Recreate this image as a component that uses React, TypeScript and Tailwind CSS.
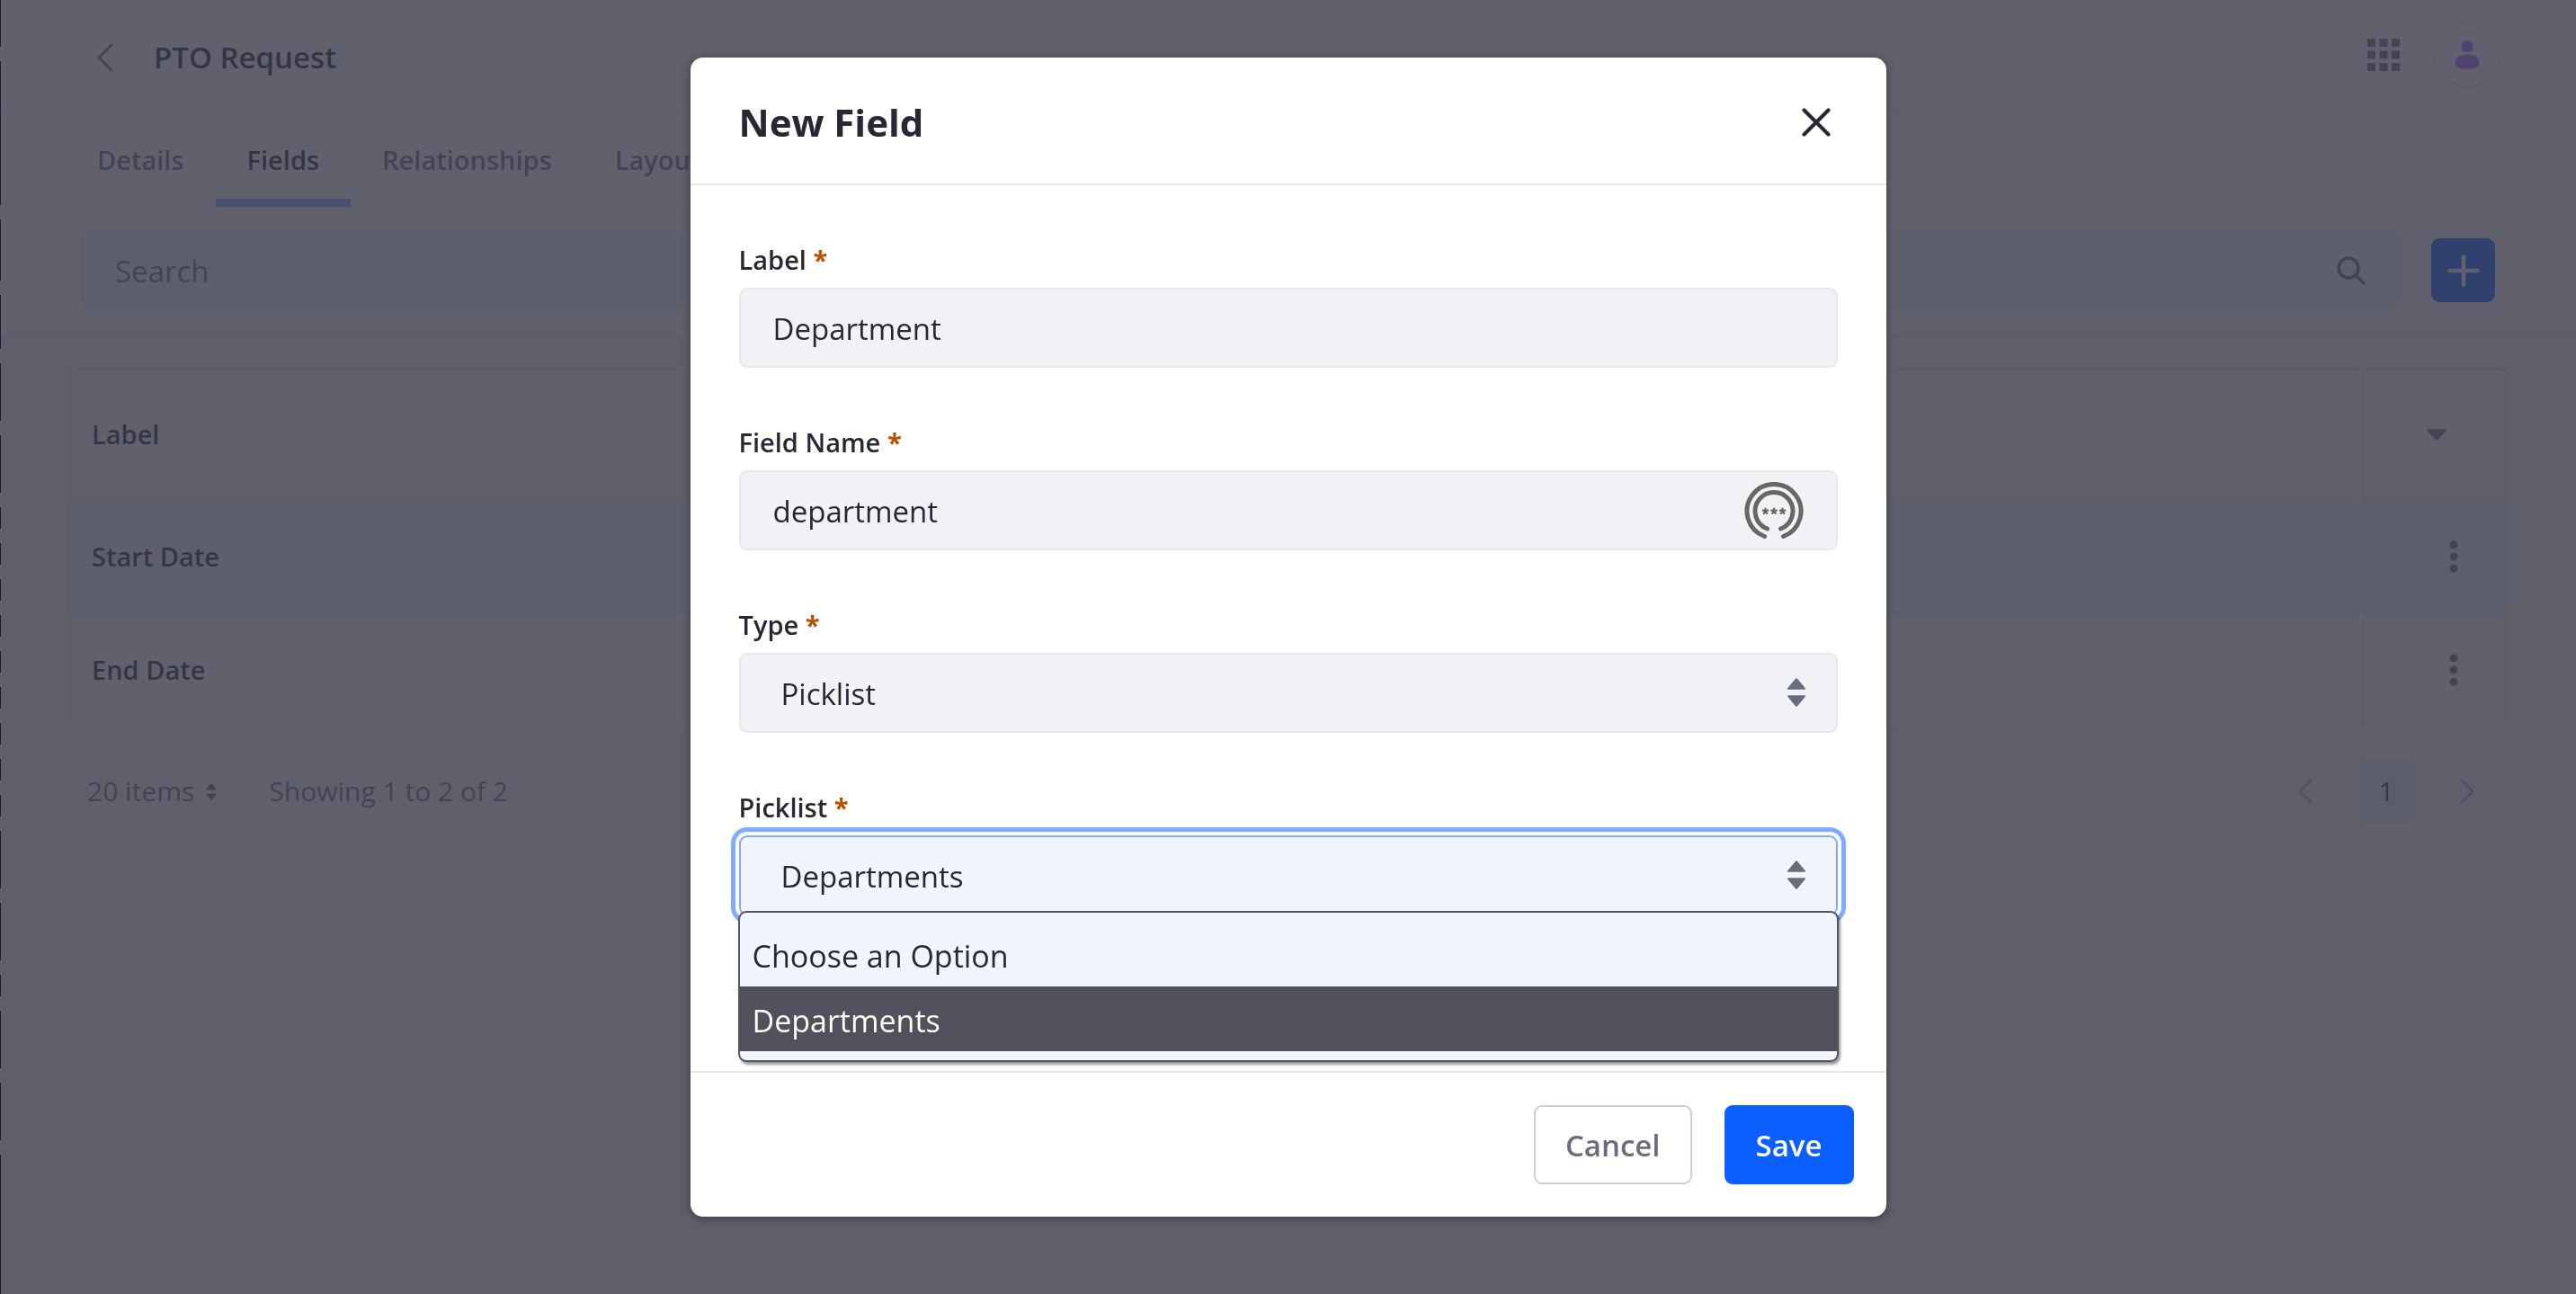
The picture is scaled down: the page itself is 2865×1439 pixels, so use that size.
import React from "react";

type IconProps = { className?: string };

const ChevronLeft = ({ className }: IconProps) => (
  <svg viewBox="0 0 18 32" className={className} fill="none" stroke="currentColor" strokeWidth="3" strokeLinecap="round" strokeLinejoin="round" aria-hidden="true">
    <path d="M16 2 2 16l14 14" />
  </svg>
);

const ChevronRight = ({ className }: IconProps) => (
  <svg viewBox="0 0 18 32" className={className} fill="none" stroke="currentColor" strokeWidth="3" strokeLinecap="round" strokeLinejoin="round" aria-hidden="true">
    <path d="m2 2 14 14L2 30" />
  </svg>
);

const CaretDouble = ({ className }: IconProps) => (
  <svg viewBox="0 0 20 32" className={className} fill="currentColor" aria-hidden="true">
    <path d="M9 .8a1.3 1.3 0 0 1 2 0l8.600 10.200c.8 1 .3 1.800-.8 1.800H1.200c-1.100 0-1.600-.8-.8-1.800z" />
    <path d="M9 31.200a1.300 1.300 0 0 0 2 0l8.600-10.200c.8-1 .3-1.800-.8-1.800H1.200c-1.100 0-1.600.8-.8 1.800z" />
  </svg>
);

const CaretDown = ({ className }: IconProps) => (
  <svg viewBox="0 0 22 13" className={className} fill="currentColor" aria-hidden="true">
    <path d="M12 12.200a1.400 1.400 0 0 1-2 0L.5 2.200C-.3 1.200.2.200 1.300.200h19.400c1.100 0 1.600 1 .8 2z" />
  </svg>
);

const DotsVertical = ({ className }: IconProps) => (
  <svg viewBox="0 0 10 36" className={className} fill="currentColor" aria-hidden="true">
    <circle cx="5" cy="4.700" r="4.500" />
    <circle cx="5" cy="18" r="4.500" />
    <circle cx="5" cy="31.300" r="4.500" />
  </svg>
);

const AppsGrid = ({ className }: IconProps) => (
  <svg viewBox="0 0 36 36" className={className} fill="currentColor" aria-hidden="true">
    {[0, 13.5, 27].map((y) =>
      [0, 13.5, 27].map((x) => <rect key={`${x}-${y}`} x={x} y={y} width="9" height="9" rx="1" />),
    )}
  </svg>
);

const UserIcon = ({ className }: IconProps) => (
  <svg viewBox="0 0 28 32" className={className} fill="currentColor" aria-hidden="true">
    <circle cx="14" cy="6.800" r="6.800" />
    <path d="M.5 24.500C.5 18.500 6 15.500 14 15.500s13.500 3 13.500 9c0 5-4 7.200-13.500 7.200S.5 29.500.5 24.500z" />
  </svg>
);

const SearchIcon = ({ className }: IconProps) => (
  <svg viewBox="0 0 32 32" className={className} fill="none" stroke="currentColor" strokeWidth="3.500" strokeLinecap="round" aria-hidden="true">
    <circle cx="13" cy="13" r="11" />
    <path d="m21.500 21.500 8.500 8.500" />
  </svg>
);

const PlusIcon = ({ className }: IconProps) => (
  <svg viewBox="0 0 36 36" className={className} fill="none" stroke="currentColor" strokeWidth="4.500" strokeLinecap="round" aria-hidden="true">
    <path d="M18 2.500v31M2.500 18h31" />
  </svg>
);

const CloseIcon = ({ className }: IconProps) => (
  <svg viewBox="0 0 32 32" className={className} fill="none" stroke="currentColor" strokeWidth="4.200" strokeLinecap="round" aria-hidden="true">
    <path d="m2.500 2.500 27 27M29.500 2.500l-27 27" />
  </svg>
);

const star = "M0-3.800v3.800M0 0l3.600-1.200M0 0l2.300 3.200M0 0l-2.300 3.200M0 0l-3.600-1.200";

const PasswordIcon = ({ className }: IconProps) => (
  <svg viewBox="0 0 66 64" className={className} fill="none" stroke="currentColor" strokeLinecap="round" aria-hidden="true">
    <g strokeWidth="5">
      <path d="M22.500 60.500a30 30 0 1 1 21 0" />
      <path d="M25.500 52a21 21 0 1 1 15 0" />
    </g>
    <g strokeWidth="2.200" strokeLinecap="butt">
      <path transform="translate(23.500 32.500)" d={star} />
      <path transform="translate(33 32.500)" d={star} />
      <path transform="translate(42.500 32.500)" d={star} />
    </g>
  </svg>
);

const tabs = ["Details", "Fields", "Relationships", "Layouts"];
const rows = ["Start Date", "End Date"];

/* Dashes along the window's left edge, from top to bottom. */
const edgeDashes = [
  "h-[52px]", "h-[160px]", "h-[68px]", "h-[60px]", "h-16", "h-16",
  "h-6", "h-6", "h-6", "h-6", "h-6", "h-6", "h-6", "h-6", "h-6",
  "h-16", "h-16", "h-6", "h-16", "h-16", "flex-1",
];

const Required = () => <span className="font-bold text-[#b95000]">*</span>;

function Field({ id, label, children }: { id: string; label: string; children: React.ReactNode }) {
  return (
    <div className="flex flex-col">
      <label htmlFor={id} className="mb-3 text-[29px] leading-[38px] font-semibold">
        {label} <Required />
      </label>
      <div className="relative">{children}</div>
    </div>
  );
}

const control =
  "block h-[89px] w-full appearance-none rounded-[9px] border-2 border-[#e7e7ed] bg-[#f1f2f5] pt-0.5 text-[33px] leading-[52px] outline-none";

function Page() {
  return (
    <div className="flex min-h-screen flex-col bg-[#f7f8f9]">
      <header className="flex h-[124px] items-center border-b-2 border-[#f1f2f5] bg-white pr-[84px] pl-[108px]">
        <div className="flex items-center pt-1.5">
          <button type="button" aria-label="Back" className="flex w-[63px] text-[#6b6c7e]">
            <ChevronLeft className="h-[32px] w-[18px]" />
          </button>
          <h1 className="text-[33px] leading-[48px] font-semibold">PTO Request</h1>
        </div>
        <div className="ml-auto flex items-center gap-[38px]">
          <button type="button" aria-label="Applications" className="text-[#6b6c7e]">
            <AppsGrid className="size-[36px]" />
          </button>
          <button type="button" aria-label="User profile" className="flex size-[74px] items-center justify-center rounded-full border-2 border-[#e7e7ed] text-[#a86ff5]">
            <UserIcon className="h-[32px] w-[28px]" />
          </button>
        </div>
      </header>

      <nav className="flex h-[108px] border-b-2 border-[#f1f2f5] bg-white pl-[73px]">
        {tabs.map((tab) => (
          <a
            key={tab}
            href="#"
            aria-current={tab === "Fields" ? "page" : undefined}
            className={
              tab === "Fields"
                ? "border-b-[9px] border-[#80acff] px-[35px] pt-[33px] text-[29px] leading-[42px] font-semibold"
                : "px-[35px] pt-[33px] text-[29px] leading-[42px] font-semibold text-[#6b6c7e]"
            }
          >
            {tab}
          </a>
        ))}
      </nav>

      <div className="flex items-center gap-9 border-b-2 border-[#e7e7ed] bg-white pt-[24px] pr-[90px] pb-[28px] pl-[91px]">
        <div className="flex h-[89px] flex-1 items-center rounded-[9px] border-2 border-[#e7e7ed] bg-[#f1f2f5] px-[35px]">
          <input type="search" aria-label="Search" placeholder="Search" className="flex-1 bg-transparent pt-0.5 text-[33px] leading-[48px] outline-none placeholder:text-[#6b6c7e]" />
          <button type="button" aria-label="Submit search" className="text-[#6b6c7e]">
            <SearchIcon className="size-[32px]" />
          </button>
        </div>
        <button type="button" aria-label="Add field" className="flex size-[71px] items-center justify-center rounded-[9px] bg-[#0b5fff] text-white">
          <PlusIcon className="size-[36px]" />
        </button>
      </div>

      <main className="px-[74px] pt-[35px]">
        <table className="w-full border-separate border-spacing-0 overflow-hidden rounded-[9px] border-2 border-[#e7e7ed] bg-white text-[29px] leading-[42px]">
          <thead>
            <tr className="h-[144px]">
              <th scope="col" className="border-b-2 border-[#e7e7ed] pl-[26px] text-left font-semibold">Label</th>
              <th scope="col" className="w-[161px] border-b-2 border-l-2 border-[#e7e7ed] text-[#6b6c7e]">
                <button type="button" aria-label="Choose columns" className="mx-auto block">
                  <CaretDown className="h-[13px] w-[22px]" />
                </button>
              </th>
            </tr>
          </thead>
          <tbody>
            {rows.map((row, i) => (
              <tr key={row} className={i === 0 ? "h-[127px] bg-[#eef5f8]" : "h-[124px]"}>
                <td className={i === 0 ? "border-b-2 border-[#e7e7ed] pl-[26px] font-semibold" : "pl-[26px] font-semibold"}>{row}</td>
                <td className={i === 0 ? "border-b-2 border-l-2 border-[#e7e7ed] pr-[55px]" : "border-l-2 border-[#e7e7ed] pr-[55px]"}>
                  <button type="button" aria-label={`Actions for ${row}`} className="ml-auto block text-[#6b6c7e]">
                    <DotsVertical className="h-[36px] w-[10px]" />
                  </button>
                </td>
              </tr>
            ))}
          </tbody>
        </table>

        <div className="mt-[36px] flex items-center pr-[39px] pl-[23px] text-[30px] leading-[42px] text-[#6b6c7e]">
          <button type="button" className="flex items-center gap-[13px]">
            20 items
            <CaretDouble className="h-[19px] w-[12px]" />
          </button>
          <p className="ml-[58px]">Showing 1 to 2 of 2</p>
          <div className="ml-auto flex items-center gap-[50px]">
            <button type="button" aria-label="Previous page" className="text-[#a7a9bc]">
              <ChevronLeft className="h-[28px] w-[16px]" />
            </button>
            <button type="button" aria-current="page" className="h-[70px] w-[64px] rounded-[9px] bg-[#dfebf0] text-[#272833]">
              1
            </button>
            <button type="button" aria-label="Next page" className="text-[#a7a9bc]">
              <ChevronRight className="h-[28px] w-[16px]" />
            </button>
          </div>
        </div>
      </main>
    </div>
  );
}

function NewFieldModal() {
  return (
    <div role="dialog" aria-modal="true" aria-labelledby="modal-title" className="flex h-full w-full max-w-[1330px] flex-col rounded-[14px] bg-white shadow-[0_2px_9px_2px_rgba(39,40,51,0.45)]">
      <header className="flex h-[142px] shrink-0 items-center justify-between border-b-2 border-[#e7e7ed] pt-1 pr-[62px] pl-[54px]">
        <h2 id="modal-title" className="text-[42px] leading-[56px] font-bold">New Field</h2>
        <button type="button" aria-label="Close">
          <CloseIcon className="size-[32px]" />
        </button>
      </header>

      <form id="new-field" className="flex flex-1 flex-col gap-[64px] px-[54px] pt-[64px]">
        <Field id="label" label="Label">
          <input id="label" type="text" defaultValue="Department" className={`${control} px-9`} />
        </Field>
        <Field id="name" label="Field Name">
          <input id="name" type="text" defaultValue="department" className={`${control} px-9`} />
          <button type="button" aria-label="Fill from password manager" className="absolute top-[13px] right-[38px] text-[#676866]">
            <PasswordIcon className="h-[64px] w-[66px]" />
          </button>
        </Field>
        <Field id="type" label="Type">
          <select id="type" defaultValue="Picklist" className={`${control} px-[45px]`}>
            <option>Picklist</option>
          </select>
          <CaretDouble className="pointer-events-none absolute top-[28px] right-[36px] h-[32px] w-[20px] text-[#6b6c7e]" />
        </Field>
        <Field id="picklist" label="Picklist">
          <select
            id="picklist"
            defaultValue="Departments"
            className="block h-[89px] w-full appearance-none rounded-[9px] border-2 border-[#80acff] bg-[#f0f5ff] px-[45px] pt-0.5 text-[33px] leading-[52px] shadow-[0_0_0_4px_#fff,0_0_0_9px_#80acff] outline-none"
          >
            <option>Choose an Option</option>
            <option>Departments</option>
          </select>
          <CaretDouble className="pointer-events-none absolute top-[28px] right-[36px] h-[32px] w-[20px] text-[#6b6c7e]" />
          <ul role="listbox" aria-label="Picklist" className="absolute -inset-x-px top-[84px] rounded-[9px] border-2 border-[#54555f] bg-[#f0f5ff] py-[10px] text-[34px] leading-[68px] shadow-[2px_3px_3px_rgba(0,0,0,0.4)]">
            <li role="option" aria-selected="false" className="px-[14px] pt-1">Choose an Option</li>
            <li role="option" aria-selected="true" className="bg-[#51515c] px-[14px] pt-1 text-white">Departments</li>
          </ul>
        </Field>
      </form>

      <footer className="flex shrink-0 justify-end gap-9 border-t-2 border-[#e7e7ed] p-9">
        <button type="button" className="h-[88px] rounded-[9px] border-2 border-[#cdced9] px-[33px] pt-0.5 text-[33px] leading-[48px] font-semibold text-[#6b6c7e]">
          Cancel
        </button>
        <button type="submit" form="new-field" className="h-[88px] rounded-[9px] bg-[#0b5fff] px-[35px] pt-0.5 text-[33px] leading-[48px] font-semibold text-white">
          Save
        </button>
      </footer>
    </div>
  );
}

export default function App() {
  return (
    <div className="font-['Open_Sans','Noto_Sans',sans-serif] text-[#272833]">
      <Page />
      <div className="fixed inset-0 flex justify-center bg-[#393a4a]/80 pt-16 pb-[86px]">
        <NewFieldModal />
      </div>
      <div className="pointer-events-none fixed inset-y-0 left-0 flex w-px flex-col gap-4 bg-[#62625f]">
        {edgeDashes.map((height, i) => (
          <span key={i} className={`block bg-[#202020] ${height}`} />
        ))}
      </div>
    </div>
  );
}
